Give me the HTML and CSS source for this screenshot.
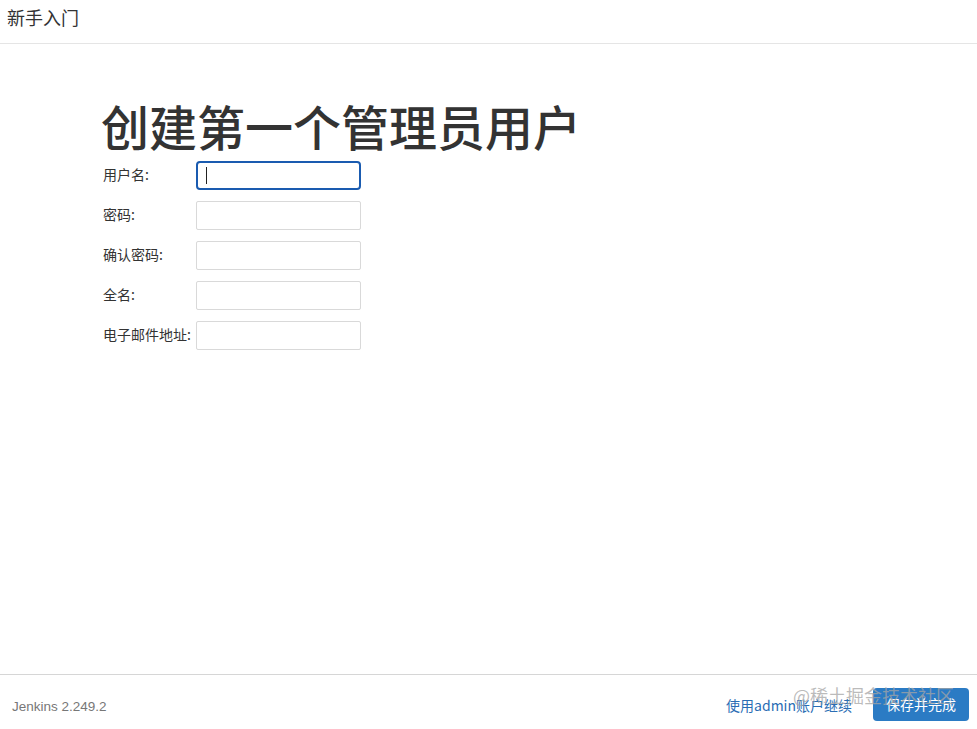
FILE: index.html
```html
<!DOCTYPE html>
<html lang="zh-CN">
<head>
<meta charset="utf-8">
<title>新手入门</title>
<link rel="stylesheet" href="styles.css">
</head>
<body>
<div class="page">
  <header class="topbar">新手入门</header>
  <main class="content">
    <h1 class="title">创建第一个管理员用户</h1>
    <form class="form">
      <div class="row">
        <label class="label">用户名:</label>
        <div class="field focused"><span class="caret"></span></div>
      </div>
      <div class="row">
        <label class="label">密码:</label>
        <div class="field"></div>
      </div>
      <div class="row">
        <label class="label">确认密码:</label>
        <div class="field"></div>
      </div>
      <div class="row">
        <label class="label">全名:</label>
        <div class="field"></div>
      </div>
      <div class="row">
        <label class="label">电子邮件地址:</label>
        <div class="field"></div>
      </div>
    </form>
  </main>
  <footer class="footer">
    <span class="version">Jenkins 2.249.2</span>
    <div class="actions">
      <a class="skip">使用admin账户继续</a>
      <button class="save" type="button">保存并完成</button>
      <span class="watermark">@稀土掘金技术社区</span>
    </div>
  </footer>
</div>
</body>
</html>
```
FILE: styles.css
```css
* { box-sizing: border-box; }
html, body { margin: 0; padding: 0; background: #fff; }
body {
  font-family: "Noto Sans CJK SC", "Liberation Sans", sans-serif;
  color: #333;
}
.page {
  width: 977px;
  height: 729px;
  display: flex;
  flex-direction: column;
}
.topbar {
  height: 44px;
  border-bottom: 1px solid #e5e5e5;
  padding: 0 0 0 7px;
  font-size: 18px;
  line-height: 34px;
  color: #333;
}
.content {
  flex: 1;
  padding: 57px 0 0 101px;
}
.title {
  margin: 0;
  font-size: 48px;
  line-height: 48px;
  font-weight: 500;
  color: #333;
}
.form {
  margin-top: 12px;
  display: flex;
  flex-direction: column;
  gap: 11px;
  padding-left: 2px;
}
.row {
  display: flex;
  align-items: center;
  height: 29px;
}
.label {
  width: 93px;
  font-size: 14px;
  color: #333;
  line-height: 20px;
  padding-bottom: 3px;
  white-space: nowrap;
}
.field {
  position: relative;
  width: 165px;
  height: 29px;
  border: 1px solid #d9d9d9;
  border-radius: 2px;
  background: #fff;
}
.field.focused {
  border: 2px solid #1a5bb0;
  border-radius: 4px;
}
.caret {
  position: absolute;
  left: 8px;
  top: 4px;
  width: 1px;
  height: 17px;
  background: #222;
}
.footer {
  height: 55px;
  border-top: 1px solid #d6d6d6;
  display: flex;
  align-items: center;
  justify-content: space-between;
  padding: 5px 8px 0 12px;
}
.version {
  font-family: "Liberation Sans", "Noto Sans CJK SC", sans-serif;
  font-size: 13.5px;
  color: #777;
  padding-top: 4px;
}
.actions {
  position: relative;
  display: flex;
  align-items: center;
  gap: 21px;
}
.skip {
  font-size: 14px;
  color: #2a6db4;
  text-decoration: none;
}
.save {
  width: 96px;
  height: 33px;
  border: none;
  border-radius: 4px;
  background: #2b7bc4;
  color: #fff;
  font-family: "Noto Sans CJK SC", sans-serif;
  font-size: 14px;
  padding: 0 0 2px;
}
.watermark {
  position: absolute;
  z-index: 2;
  left: 67px;
  top: -6px;
  font-size: 18px;
  color: rgba(165, 165, 165, 0.75);
  white-space: nowrap;
  pointer-events: none;
}
```
